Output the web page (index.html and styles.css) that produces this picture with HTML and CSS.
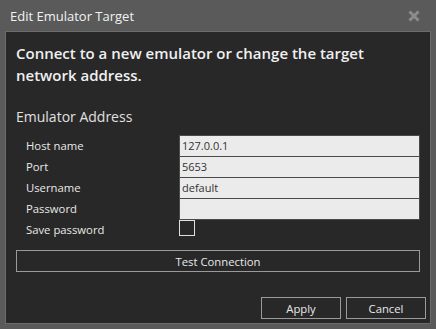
FILE: index.html
```html
<!DOCTYPE html>
<html lang="en">
<head>
    <meta charset="UTF-8">
    <title>Edit Emulator Target</title>
    <link rel="stylesheet" href="styles.css">
</head>
<body>
    <div class="window">
        <div class="titlebar">
            <span class="title">Edit Emulator Target</span>
            <svg class="close" width="12" height="12" viewBox="0 0 12 12">
                <path d="M1.5 1.5 L10.5 10.5 M10.5 1.5 L1.5 10.5" stroke="#8c8c8c" stroke-width="3"/>
            </svg>
        </div>
        <div class="panel">
            <h1 class="heading">Connect to a new emulator or change the target network address.</h1>
            <h2 class="section">Emulator Address</h2>
            <div class="form">
                <label class="label">Host name</label>
                <div class="field">127.0.0.1</div>
                <label class="label">Port</label>
                <div class="field">5653</div>
                <label class="label">Username</label>
                <div class="field">default</div>
                <label class="label">Password</label>
                <div class="field"></div>
                <label class="label">Save password</label>
                <div class="check-cell"><span class="checkbox"></span></div>
            </div>
            <button class="btn btn-wide">Test Connection</button>
            <div class="footer">
                <button class="btn">Apply</button>
                <button class="btn">Cancel</button>
            </div>
        </div>
    </div>
</body>
</html>
```

FILE: styles.css
```css
html, body {
    margin: 0;
    padding: 0;
}

body {
    width: 436px;
    height: 329px;
    background: #5a5a5a;
    font-family: "Open Sans", "Noto Sans", sans-serif;
    color: #e8e8e8;
    overflow: hidden;
}

.window {
    display: flex;
    flex-direction: column;
    height: 329px;
    padding: 0 5px 5px 5px;
    box-sizing: border-box;
}

.titlebar {
    height: 31px;
    display: flex;
    align-items: center;
    justify-content: space-between;
    padding: 0 11px 0 5px;
}

.title {
    font-size: 13px;
    color: #f2f2f2;
}

.panel {
    flex: 1;
    background: #282828;
    border: 1px solid #6c6c6c;
    display: flex;
    flex-direction: column;
    padding: 0 9px 0 10px;
}

.heading {
    margin: 10px 0 0 0;
    max-width: 375px;
    font-size: 15px;
    font-weight: 600;
    line-height: 22px;
    color: #f0f0f0;
}

.section {
    margin: 20px 0 0 0;
    font-size: 14px;
    font-weight: 400;
    line-height: 22px;
    color: #e0e0e0;
}

.form {
    display: grid;
    grid-template-columns: 153px 241px;
    grid-auto-rows: 21px;
    margin: 7px 0 0 10px;
}

.label {
    font-size: 11.3px;
    line-height: 21px;
    color: #e8e8e8;
}

.field {
    background: #ebebeb;
    border: 1px solid #4a4a4a;
    margin-bottom: -1px;
    font-size: 11px;
    line-height: 20px;
    color: #333;
    padding: 0 2px;
    box-sizing: border-box;
    height: 22px;
}

.check-cell {
    padding-top: 1px;
}

.checkbox {
    display: block;
    width: 16px;
    height: 16px;
    box-sizing: border-box;
    border: 1px solid #e0e0e0;
}

.btn {
    font-family: "Open Sans", "Noto Sans", sans-serif;
    font-size: 11.3px;
    background: transparent;
    color: #e8e8e8;
    border: 1px solid #9a9a9a;
    height: 22px;
    padding: 0;
    width: 80px;
}

.btn-wide {
    width: 404px;
    margin-top: 10px;
}

.footer {
    margin-top: auto;
    margin-right: -5px;
    margin-bottom: 4px;
    display: flex;
    justify-content: flex-end;
    gap: 5px;
}
```
